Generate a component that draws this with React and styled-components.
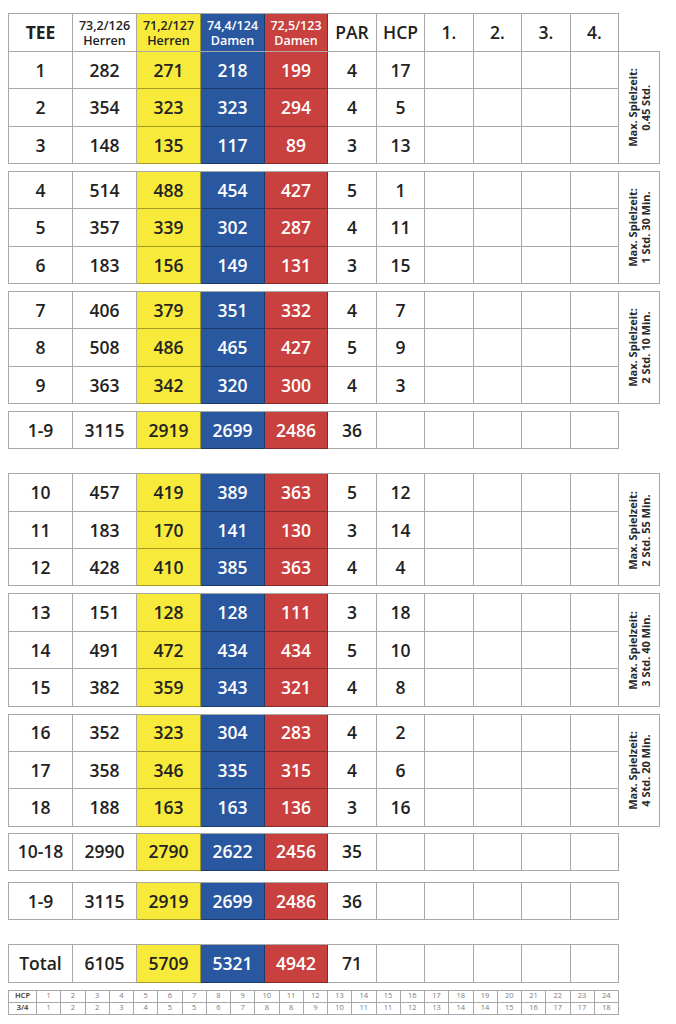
import React from "react";
import styled, { createGlobalStyle } from "styled-components";

const GlobalStyle = createGlobalStyle`
  * { box-sizing: border-box; }
  body {
    margin: 0;
    background: #ffffff;
    font-family: "Open Sans", "DejaVu Sans", sans-serif;
    color: #222222;
  }
`;

const COLS = "64px 64px 64px 64px 63px 49px 48px 49px 48px 49px 48px";
const LINE = "rgba(0, 0, 0, 0.34)";

const tees = [
  { bg: "#ffffff", fg: "#222222" },
  { bg: "#f8ea3b", fg: "#222222" },
  { bg: "#2a58a0", fg: "#ffffff" },
  { bg: "#c8413f", fg: "#ffffff" },
];

const groups = [
  {
    time: "0.45 Std.",
    holes: [
      ["1", 282, 271, 218, 199, 4, 17],
      ["2", 354, 323, 323, 294, 4, 5],
      ["3", 148, 135, 117, 89, 3, 13],
    ],
  },
  {
    time: "1 Std. 30 Min.",
    holes: [
      ["4", 514, 488, 454, 427, 5, 1],
      ["5", 357, 339, 302, 287, 4, 11],
      ["6", 183, 156, 149, 131, 3, 15],
    ],
  },
  {
    time: "2 Std. 10 Min.",
    holes: [
      ["7", 406, 379, 351, 332, 4, 7],
      ["8", 508, 486, 465, 427, 5, 9],
      ["9", 363, 342, 320, 300, 4, 3],
    ],
  },
  {
    time: "2 Std. 55 Min.",
    holes: [
      ["10", 457, 419, 389, 363, 5, 12],
      ["11", 183, 170, 141, 130, 3, 14],
      ["12", 428, 410, 385, 363, 4, 4],
    ],
  },
  {
    time: "3 Std. 40 Min.",
    holes: [
      ["13", 151, 128, 128, 111, 3, 18],
      ["14", 491, 472, 434, 434, 5, 10],
      ["15", 382, 359, 343, 321, 4, 8],
    ],
  },
  {
    time: "4 Std. 20 Min.",
    holes: [
      ["16", 352, 323, 304, 283, 4, 2],
      ["17", 358, 346, 335, 315, 4, 6],
      ["18", 188, 163, 163, 136, 3, 16],
    ],
  },
];

const front = ["1-9", 3115, 2919, 2699, 2486, 36];
const back = ["10-18", 2990, 2790, 2622, 2456, 35];
const total = ["Total", 6105, 5709, 5321, 4942, 71];

const hcpRow = Array.from({ length: 24 }, (_, i) => i + 1);
const threeQuarter = [1, 2, 2, 3, 4, 5, 5, 6, 7, 8, 8, 9, 10, 11, 11, 12, 13, 14, 14, 15, 16, 17, 17, 18];

const Page = styled.div`
  padding: 13px 0 0 8px;
  display: flex;
  flex-direction: column;
  align-items: flex-start;
`;

const Block = styled.div`
  display: grid;
  grid-template-columns: ${({ $side }) => ($side ? `${COLS} 41px` : COLS)};
  grid-auto-rows: ${({ $rowH }) => $rowH || "37.35px"};
  margin-top: ${({ $gap }) => $gap || 0}px;
  border-top: 1px solid ${LINE};
  border-left: 1px solid ${LINE};
`;

const Cell = styled.div`
  display: flex;
  align-items: center;
  justify-content: center;
  border-right: 1px solid ${LINE};
  border-bottom: ${({ $noBottom }) => ($noBottom ? "none" : `1px solid ${LINE}`)};
  background: ${({ $bg }) => $bg || "#ffffff"};
  color: ${({ $fg }) => $fg || "#222222"};
  font-size: 17.5px;
  font-weight: ${({ $bold }) => ($bold ? 700 : 600)};
  line-height: 1;
  padding-top: 1px;
`;

const HeadLabel = styled.div`
  font-size: 12.5px;
  line-height: 15px;
  font-weight: 600;
  text-align: center;
`;

const SideCell = styled.div`
  grid-column: 12;
  grid-row: 1 / span 3;
  display: flex;
  align-items: center;
  justify-content: center;
  border-right: 1px solid ${LINE};
  border-bottom: 1px solid ${LINE};
`;

const SideText = styled.div`
  writing-mode: vertical-rl;
  transform: rotate(180deg);
  font-size: 11px;
  line-height: 12.5px;
  font-weight: 700;
  color: #2a2a2a;
  text-align: center;
  white-space: nowrap;
`;

const MiniTable = styled.div`
  display: grid;
  grid-template-columns: 28px repeat(24, 1fr);
  grid-auto-rows: 12px;
  width: 611px;
  margin-top: 7px;
  border-top: 1px solid ${LINE};
  border-left: 1px solid ${LINE};
`;

const MiniCell = styled.div`
  display: flex;
  align-items: center;
  justify-content: center;
  border-right: 1px solid ${LINE};
  border-bottom: 1px solid ${LINE};
  font-size: 7.5px;
  line-height: 1;
  font-weight: ${({ $label }) => ($label ? 700 : 400)};
  color: ${({ $label }) => ($label ? "#555555" : "#7a7a7a")};
`;

const valueCells = (values) =>
  values.map((v, i) => (
    <Cell key={i} $bg={tees[i].bg} $fg={tees[i].fg}>
      {v}
    </Cell>
  ));

const Header = () => (
  <Block $rowH="37px">
    <Cell $bold $noBottom>TEE</Cell>
    {[
      ["73,2/126", "Herren"],
      ["71,2/127", "Herren"],
      ["74,4/124", "Damen"],
      ["72,5/123", "Damen"],
    ].map(([rating, label], i) => (
      <Cell key={rating} $bg={tees[i].bg} $fg={tees[i].fg} $noBottom>
        <HeadLabel>
          {rating}
          <br />
          {label}
        </HeadLabel>
      </Cell>
    ))}
    <Cell $noBottom>PAR</Cell>
    <Cell $noBottom>HCP</Cell>
    {["1.", "2.", "3.", "4."].map((p) => (
      <Cell key={p} $noBottom>{p}</Cell>
    ))}
  </Block>
);

const HoleGroup = ({ group, gap }) => (
  <Block $side $gap={gap}>
    {group.holes.map(([hole, ...rest], r) => (
      <React.Fragment key={hole}>
        <Cell style={{ gridRow: r + 1 }}>{hole}</Cell>
        {valueCells(rest.slice(0, 4))}
        <Cell>{rest[4]}</Cell>
        <Cell>{rest[5]}</Cell>
        <Cell />
        <Cell />
        <Cell />
        <Cell />
      </React.Fragment>
    ))}
    <SideCell>
      <SideText>
        Max. Spielzeit:
        <br />
        {group.time}
      </SideText>
    </SideCell>
  </Block>
);

const SumRow = ({ row, gap }) => (
  <Block $gap={gap}>
    <Cell>{row[0]}</Cell>
    {valueCells(row.slice(1, 5))}
    <Cell>{row[5]}</Cell>
    <Cell />
    <Cell />
    <Cell />
    <Cell />
    <Cell />
  </Block>
);

export default function App() {
  return (
    <>
      <GlobalStyle />
      <Page>
        <Header />
        <HoleGroup group={groups[0]} />
        <HoleGroup group={groups[1]} gap={7} />
        <HoleGroup group={groups[2]} gap={7} />
        <SumRow row={front} gap={7} />
        <HoleGroup group={groups[3]} gap={24} />
        <HoleGroup group={groups[4]} gap={7} />
        <HoleGroup group={groups[5]} gap={7} />
        <SumRow row={back} gap={6} />
        <SumRow row={front} gap={11} />
        <SumRow row={total} gap={24} />
        <MiniTable>
          <MiniCell $label>HCP</MiniCell>
          {hcpRow.map((n) => (
            <MiniCell key={`h${n}`}>{n}</MiniCell>
          ))}
          <MiniCell $label>3/4</MiniCell>
          {threeQuarter.map((n, i) => (
            <MiniCell key={`q${i}`}>{n}</MiniCell>
          ))}
        </MiniTable>
      </Page>
    </>
  );
}
